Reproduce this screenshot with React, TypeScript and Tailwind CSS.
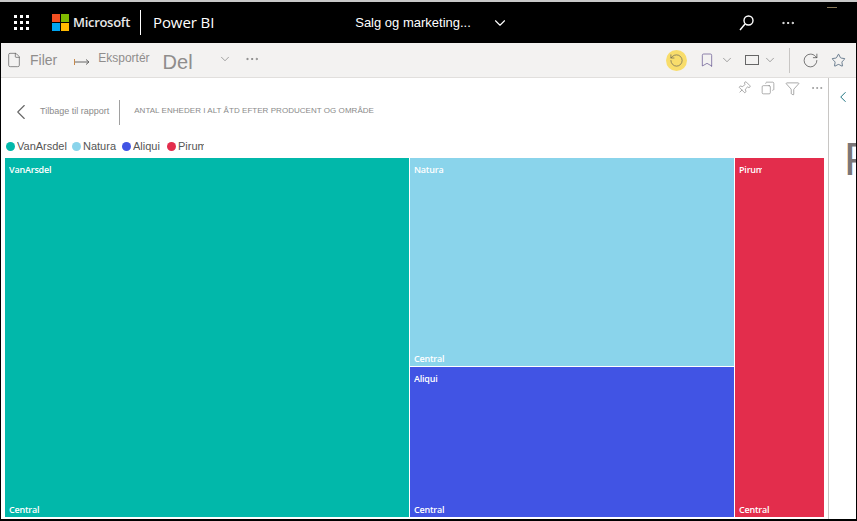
import { ChevronDown, ChevronLeft, File, Filter, MoreHorizontal, Pin, RotateCw, RotateCcw, Star, Bookmark, Copy } from 'lucide-react';

const legend = [
  { name: 'VanArsdel', color: 'bg-[#01b8aa]', width: 'w-[50px]' },
  { name: 'Natura', color: 'bg-[#8ad4eb]', width: 'w-[34px]' },
  { name: 'Aliqui', color: 'bg-[#4154e4]', width: 'w-[29px]' },
  { name: 'Pirum', color: 'bg-[#e32d4c]', width: 'w-[26px]' },
];

function Tile({ name, className, labelClass = '' }: { name: string; className: string; labelClass?: string }) {
  return (
    <div className={`flex flex-col justify-between pl-[4px] pt-[5px] pb-[1px] font-['Open_Sans',sans-serif] text-[9px] leading-[13px] font-semibold tracking-[-0.2px] text-white ${className}`}>
      <span className={`overflow-hidden whitespace-nowrap ${labelClass}`}>{name}</span>
      <span>Central</span>
    </div>
  );
}

function MsLogo() {
  return (
    <svg width="17" height="17" viewBox="0 0 17 17" className="shrink-0">
      <rect x="0" y="0" width="8" height="8" fill="#f25022" />
      <rect x="9" y="0" width="8" height="8" fill="#7fba00" />
      <rect x="0" y="9" width="8" height="8" fill="#00a4ef" />
      <rect x="9" y="9" width="8" height="8" fill="#ffb900" />
    </svg>
  );
}

function Waffle() {
  return (
    <div className="grid w-[15px] grid-cols-3 gap-[3px]">
      {Array.from({ length: 9 }).map((_, i) => (
        <span key={i} className="h-[3px] w-[3px] bg-white" />
      ))}
    </div>
  );
}

export default function App() {
  return (
    <div className="flex h-[521px] w-[857px] flex-col overflow-hidden border-t-2 border-t-[#c8c8c8] bg-black font-['Liberation_Sans',sans-serif]">
      <header className="relative flex h-[41px] shrink-0 items-center bg-black text-white">
        <div className="ml-[14px]">
          <Waffle />
        </div>
        <div className="ml-[23px]">
          <MsLogo />
        </div>
        <span className="ml-[4px] font-['Open_Sans',sans-serif] text-[13px] font-semibold tracking-[-0.3px] text-[#e8e8e8]">Microsoft</span>
        <span className="ml-[10px] h-[25px] w-px bg-white" />
        <span className="ml-[12px] font-['Open_Sans',sans-serif] text-[15px] tracking-[-0.1px]">Power BI</span>
        <span className="ml-[141px] text-[13px]">Salg og marketing...</span>
        <ChevronDown size={18} strokeWidth={1.5} className="ml-[20px]" />
        <svg width="15" height="16" viewBox="0 0 15 16" fill="none" stroke="white" strokeWidth="1.4" className="ml-[230px]">
          <circle cx="9.5" cy="5.5" r="4.5" />
          <path d="M6 9L1 15" />
        </svg>
        <MoreHorizontal size={16} strokeWidth={1.5} className="ml-[26px]" />
        <span className="absolute top-[5px] left-[827px] h-px w-[10px] bg-[#8a7a5a]" />
      </header>

      <div className="mr-px ml-px flex h-[35px] shrink-0 items-center border-b border-b-[#e1dfdd] bg-[#f3f2f1] text-[#8f8d8c]">
        <File size={16} strokeWidth={1} className="ml-[5px] text-[#555]" />
        <span className="ml-[8px] text-[14px]">Filer</span>
        <svg width="16" height="8" viewBox="0 0 16 8" className="mt-[3px] ml-[17px]" fill="none" strokeWidth="1">
          <path d="M0.5 1v6" stroke="#c98a4b" />
          <path d="M1 4h14M12 1.5L15 4l-3 2.5" stroke="#666" />
        </svg>
        <span className="-mt-[4px] ml-[8px] text-[12px]">Eksportér</span>
        <span className="mt-[4px] ml-[13px] text-[20px]">Del</span>
        <ChevronDown size={14} strokeWidth={1} className="-mt-[3px] ml-[25px] text-[#666]" />
        <MoreHorizontal size={16} strokeWidth={1} className="-mt-[3px] ml-[12px] text-[#666]" />
        <div className="ml-[406px] flex h-[21px] w-[21px] items-center justify-center rounded-full bg-[#f8dd6b]">
          <RotateCcw size={15} strokeWidth={1} className="text-[#555]" />
        </div>
        <Bookmark size={16} strokeWidth={1} className="ml-[12px] text-[#5b4a8a]" />
        <ChevronDown size={14} strokeWidth={1} className="ml-[5px] text-[#666]" />
        <span className="ml-[11px] h-[10px] w-[14px] border border-[#666]" />
        <ChevronDown size={14} strokeWidth={1} className="ml-[4px] text-[#666]" />
        <span className="ml-[12px] h-[25px] w-px bg-[#c8c6c4]" />
        <RotateCw size={17} strokeWidth={1} className="ml-[12px] text-[#444]" />
        <Star size={15} strokeWidth={1} className="ml-[12px] text-[#1b3a57]" />
      </div>

      <main className="mr-px ml-px flex h-[441px] shrink-0 bg-white">
        <section className="flex w-[827px] shrink-0 flex-col">
          <div className="flex h-[20px] shrink-0 items-center justify-end gap-[10px] pr-[4px] text-[#777]">
            <Pin size={14} strokeWidth={1} className="rotate-45" />
            <Copy size={14} strokeWidth={1} className="-scale-x-100" />
            <Filter size={15} strokeWidth={1} />
            <MoreHorizontal size={14} strokeWidth={1} />
          </div>
          <div className="flex h-[28px] shrink-0 items-center">
            <ChevronLeft size={26} strokeWidth={1} className="ml-[7px] text-[#666]" />
            <span className="ml-[6px] text-[9px] text-[#8a8a8a]">Tilbage til rapport</span>
            <span className="ml-[10px] h-[25px] w-px bg-[#a0a0a0]" />
            <span className="-mt-[3px] ml-[14px] text-[8px] tracking-[0.04px] text-[#8a8a8a]">ANTAL ENHEDER I ALT ÅTD EFTER PRODUCENT OG OMRÅDE</span>
          </div>
          <div className="flex h-[32px] shrink-0 items-center gap-[5px] pt-[8px] pl-[5px] text-[11px] text-[#555]">
            {legend.map(item => (
              <span key={item.name} className="flex items-center gap-[2px]">
                <span className={`h-[9px] w-[9px] rounded-full ${item.color}`} />
                <span className={`overflow-hidden whitespace-nowrap ${item.width}`}>{item.name}</span>
              </span>
            ))}
          </div>
          <div className="ml-[4px] flex h-[359px] w-[819px] shrink-0 gap-px">
            <Tile name="VanArsdel" className="w-[404px] bg-[#01b8aa]" />
            <div className="flex w-[324px] flex-col gap-px">
              <Tile name="Natura" className="h-[208px] bg-[#8ad4eb]" />
              <Tile name="Aliqui" className="flex-1 bg-[#4154e4]" />
            </div>
            <Tile name="Pirum" labelClass="w-[23px]" className="flex-1 bg-[#e32d4c]" />
          </div>
        </section>
        <aside className="flex-1 overflow-hidden border-l border-l-[#c8c6c4]">
          <ChevronLeft size={18} strokeWidth={1.25} className="mt-[10px] ml-[5px] text-[#0f6a78]" />
          <div className="mt-[27px] ml-[15px] w-[13px] overflow-hidden text-[46px] leading-[52px] text-[#7a7678]">P</div>
        </aside>
      </main>
    </div>
  );
}
